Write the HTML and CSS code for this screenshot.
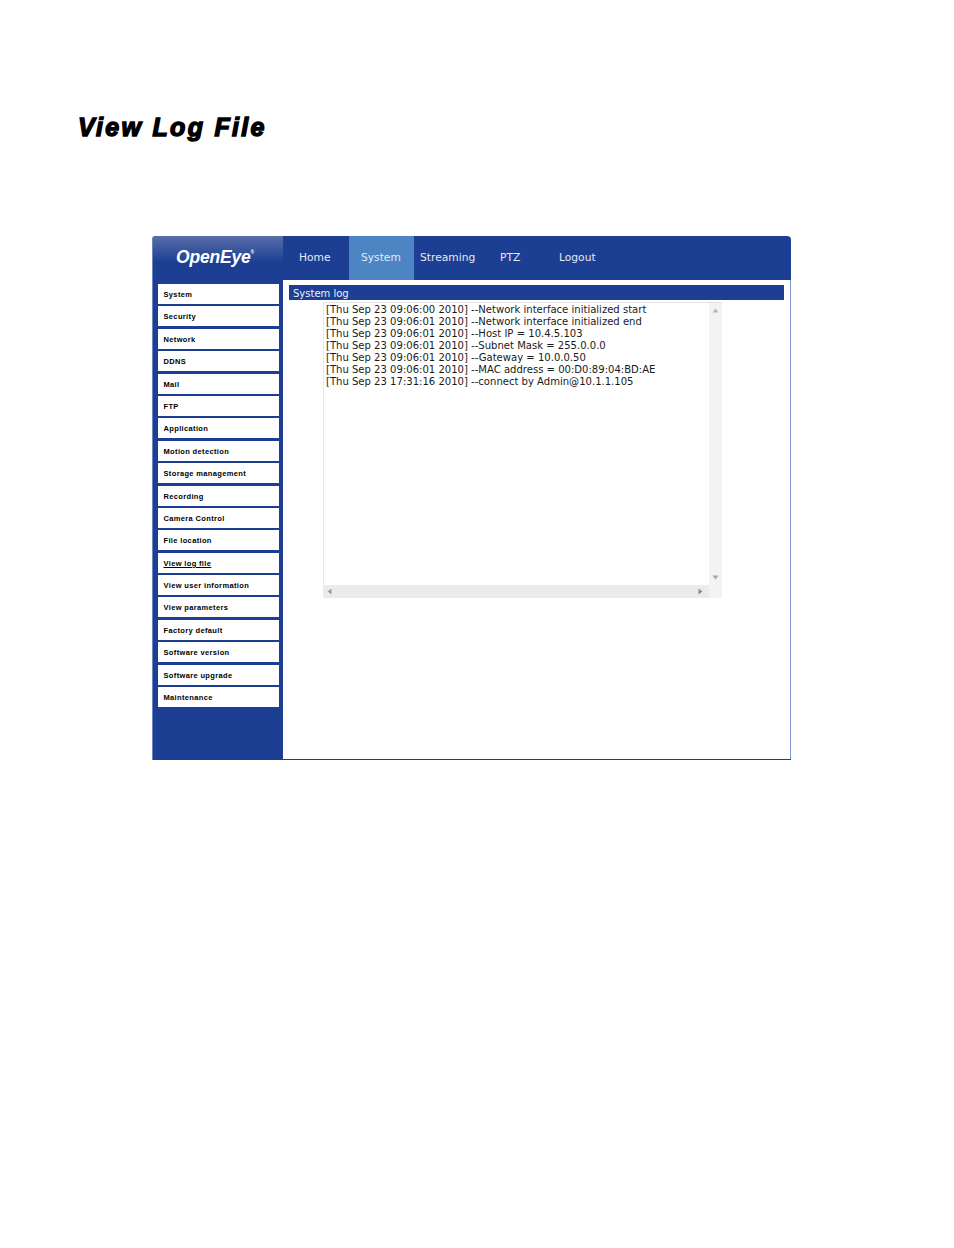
FILE: index.html
```html
<!DOCTYPE html>
<html lang="en">
<head>
    <meta charset="UTF-8">
    <title>View Log File</title>
    <link rel="stylesheet" href="styles.css">
</head>
<body>
    <h1 class="page-title">View Log File</h1>

    <div class="app">
        <div class="sidebar">
            <div class="logo">OpenEye<sup>®</sup></div>
            <ul class="menu">
                <li>System</li>
                <li>Security</li>
                <li>Network</li>
                <li>DDNS</li>
                <li>Mail</li>
                <li>FTP</li>
                <li>Application</li>
                <li>Motion detection</li>
                <li>Storage management</li>
                <li>Recording</li>
                <li>Camera Control</li>
                <li>File location</li>
                <li class="current">View log file</li>
                <li>View user information</li>
                <li>View parameters</li>
                <li>Factory default</li>
                <li>Software version</li>
                <li>Software upgrade</li>
                <li>Maintenance</li>
            </ul>
        </div>
        <div class="main">
            <div class="nav">
                <a class="tab tab-home">Home</a>
                <a class="tab tab-system active">System</a>
                <a class="tab tab-streaming">Streaming</a>
                <a class="tab tab-ptz">PTZ</a>
                <a class="tab tab-logout">Logout</a>
            </div>
            <div class="content">
                <div class="section-title">System log</div>
                <div class="log-box">
                    <div class="log-text">
                        <div>[Thu Sep 23 09:06:00 2010] --Network interface initialized start</div>
                        <div>[Thu Sep 23 09:06:01 2010] --Network interface initialized end</div>
                        <div>[Thu Sep 23 09:06:01 2010] --Host IP = 10.4.5.103</div>
                        <div>[Thu Sep 23 09:06:01 2010] --Subnet Mask = 255.0.0.0</div>
                        <div>[Thu Sep 23 09:06:01 2010] --Gateway = 10.0.0.50</div>
                        <div>[Thu Sep 23 09:06:01 2010] --MAC address = 00:D0:89:04:BD:AE</div>
                        <div>[Thu Sep 23 17:31:16 2010] --connect by Admin@10.1.1.105</div>
                    </div>
                    <div class="scroll-v">
                        <svg width="7" height="5" viewBox="0 0 7 5"><path d="M3.5 0.5L6.5 4.5H0.5Z" fill="#b4b8b8"/></svg>
                        <svg width="7" height="5" viewBox="0 0 7 5"><path d="M3.5 4.5L6.5 0.5H0.5Z" fill="#a4a8a8"/></svg>
                    </div>
                    <div class="scroll-h">
                        <svg width="5" height="7" viewBox="0 0 5 7"><path d="M0.5 3.5L4.5 0.5V6.5Z" fill="#9a9e9e"/></svg>
                        <svg width="5" height="7" viewBox="0 0 5 7"><path d="M4.5 3.5L0.5 0.5V6.5Z" fill="#8a8e8e"/></svg>
                    </div>
                    <div class="scroll-corner"></div>
                </div>
            </div>
        </div>
    </div>
</body>
</html>
```

FILE: styles.css
```css
body {
    margin: 0;
    background-color: #fff;
    font-family: "Liberation Sans", Arial, sans-serif;
}

.page-title {
    margin: 0;
    padding: 112px 0 0 78px;
    height: 236px;
    box-sizing: border-box;
    font-size: 25px;
    line-height: 30px;
    font-weight: bold;
    font-style: italic;
    letter-spacing: 2.3px;
    color: #000;
    -webkit-text-stroke: 1.4px #000;
}

.app {
    display: flex;
    width: 639px;
    height: 524px;
    margin-left: 152px;
    background-color: #1c3f94;
    border-radius: 4px 4px 0 0;
    overflow: hidden;
}

.sidebar {
    width: 131px;
    flex-shrink: 0;
    box-sizing: border-box;
    border-left: 1px solid #6f84bc;
    background: linear-gradient(#5a6ea8 0, #1c3f94 26px);
}

.logo {
    height: 48px;
    padding-left: 23px;
    font-size: 17.5px;
    line-height: 42px;
    font-weight: bold;
    font-style: italic;
    color: #fff;
    letter-spacing: -0.2px;
}

.logo sup {
    font-size: 5px;
    line-height: 0;
    font-style: normal;
    vertical-align: 9px;
}

.menu {
    list-style: none;
    margin: 0;
    padding: 0 4px 0 5px;
}

.menu li {
    height: 20px;
    margin-bottom: 2.4px;
    padding-left: 5.5px;
    background-color: #fff;
    color: #000;
    font-size: 7.5px;
    line-height: 21px;
    font-weight: bold;
    letter-spacing: 0.35px;
}

.menu .current {
    text-decoration: underline;
}

.main {
    flex: 1;
    display: flex;
    flex-direction: column;
    min-width: 0;
}

.nav {
    display: flex;
    height: 44px;
    flex-shrink: 0;
    font-family: "DejaVu Sans", Verdana, sans-serif;
    font-size: 10.7px;
    line-height: 43px;
    color: #e4e9f4;
}

.tab {
    display: block;
    box-sizing: border-box;
    white-space: nowrap;
}

.tab-home { width: 66px; padding-left: 16px; }
.tab-system { width: 65px; padding-left: 12px; }
.tab-streaming { width: 80px; padding-left: 6px; }
.tab-ptz { width: 59px; padding-left: 6px; }
.tab-logout { padding-left: 6px; }

.active {
    background-color: #4d84c4;
}

.content {
    flex: 1;
    background-color: #fff;
    padding: 5px 6px 0 6px;
    margin-bottom: 1px;
    border-right: 1px solid #7f97d0;
}

.section-title {
    height: 15px;
    padding-left: 4px;
    background-color: #1c3f94;
    color: #eef1f8;
    font-family: "DejaVu Sans", Verdana, sans-serif;
    font-size: 10px;
    line-height: 17px;
}

.log-box {
    display: grid;
    grid-template-columns: 1fr 13px;
    grid-template-rows: 1fr 13px;
    width: 399px;
    height: 296px;
    margin: 2px 0 0 34px;
    background-color: #fff;
    border-top: 1px solid #e4e4e4;
    box-sizing: border-box;
}

.log-text {
    padding: 1px 0 0 2px;
    font-family: "DejaVu Sans", Verdana, sans-serif;
    font-size: 10.05px;
    line-height: 12px;
    color: #1a1a1a;
    white-space: nowrap;
    border-left: 1px solid #e8e8e8;
}

.scroll-v {
    display: flex;
    flex-direction: column;
    justify-content: space-between;
    align-items: center;
    padding: 5px 0;
    background-color: #f3f3f3;
}

.scroll-h {
    display: flex;
    justify-content: space-between;
    align-items: center;
    padding: 0 6px 0 4px;
    background-color: #ebebeb;
}

.scroll-corner {
    background-color: #f3f3f3;
}
```
